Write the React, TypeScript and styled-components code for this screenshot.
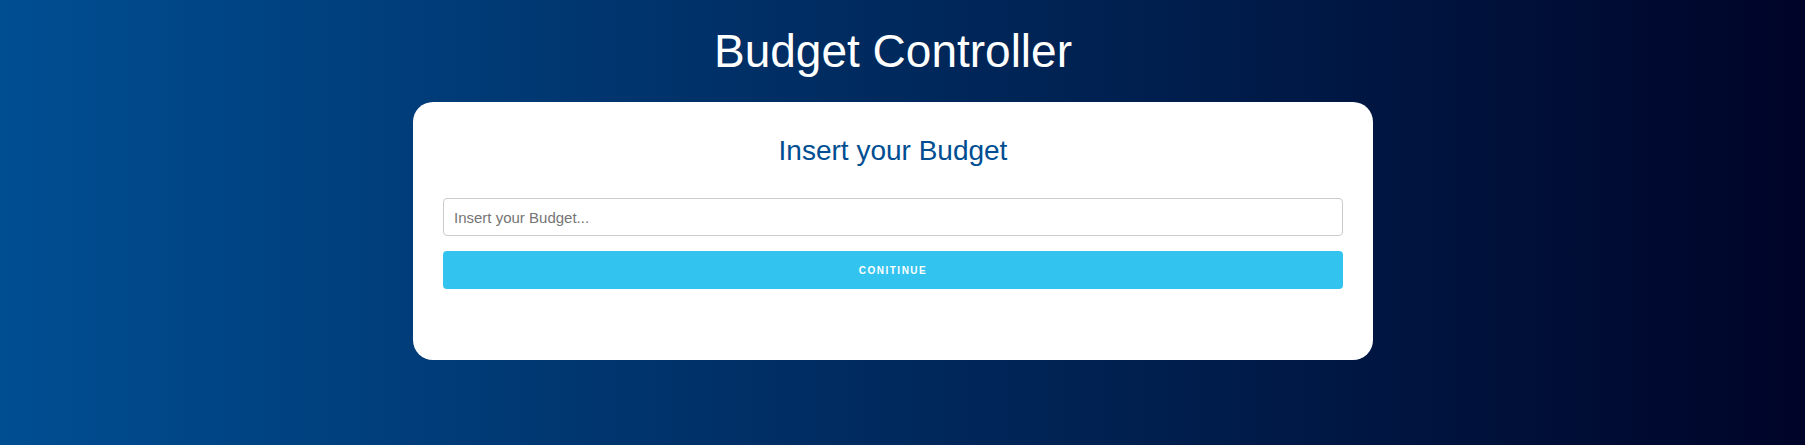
import React from "react";
import styled, { createGlobalStyle } from "styled-components";

const GlobalStyle = createGlobalStyle`
  html, body {
    margin: 0;
    padding: 0;
  }
  body {
    font-family: "Liberation Sans", Arial, sans-serif;
  }
  * { box-sizing: border-box; }
`;

const Page = styled.div`
  min-height: 100vh;
  background: linear-gradient(to right, #004e92, #000428);
  display: flex;
  flex-direction: column;
  align-items: center;
  padding: 24px 19px 40px 0;
`;

const Title = styled.h1`
  margin: 0;
  font-family: "Liberation Sans", Arial, sans-serif;
  font-weight: 400;
  font-size: 46px;
  line-height: normal;
  color: #ffffff;
  text-align: center;
`;

const Card = styled.section`
  margin-top: 24px;
  width: 960px;
  background: #ffffff;
  border-radius: 20px;
  padding: 33px 30px 71px;
  display: flex;
  flex-direction: column;
`;

const Heading = styled.h2`
  margin: 0 0 31px;
  font-family: "Liberation Sans", Arial, sans-serif;
  font-weight: 400;
  font-size: 28px;
  line-height: normal;
  color: #004e92;
  text-align: center;
`;

const Form = styled.form`
  display: flex;
  flex-direction: column;
  gap: 15px;
`;

const BudgetInput = styled.input`
  height: 38px;
  width: 100%;
  border: 1px solid #cccccc;
  border-radius: 4px;
  padding: 0 10px;
  font-family: "Liberation Sans", Arial, sans-serif;
  font-size: 15px;
  color: #333;
  outline: none;
  &::placeholder {
    color: #757575;
  }
`;

const ContinueButton = styled.button`
  height: 38px;
  width: 100%;
  border: none;
  border-radius: 4px;
  background: #33c3ef;
  color: #ffffff;
  font-family: "Liberation Sans", Arial, sans-serif;
  font-weight: 700;
  font-size: 10px;
  letter-spacing: 1.5px;
  text-transform: uppercase;
  cursor: pointer;
`;

export default function App() {
  return (
    <>
      <GlobalStyle />
      <Page>
        <Title>Budget Controller</Title>
        <Card>
          <Heading>Insert your Budget</Heading>
          <Form onSubmit={(e) => e.preventDefault()}>
            <BudgetInput type="number" placeholder="Insert your Budget..." />
            <ContinueButton type="submit">Conitinue</ContinueButton>
          </Form>
        </Card>
      </Page>
    </>
  );
}
